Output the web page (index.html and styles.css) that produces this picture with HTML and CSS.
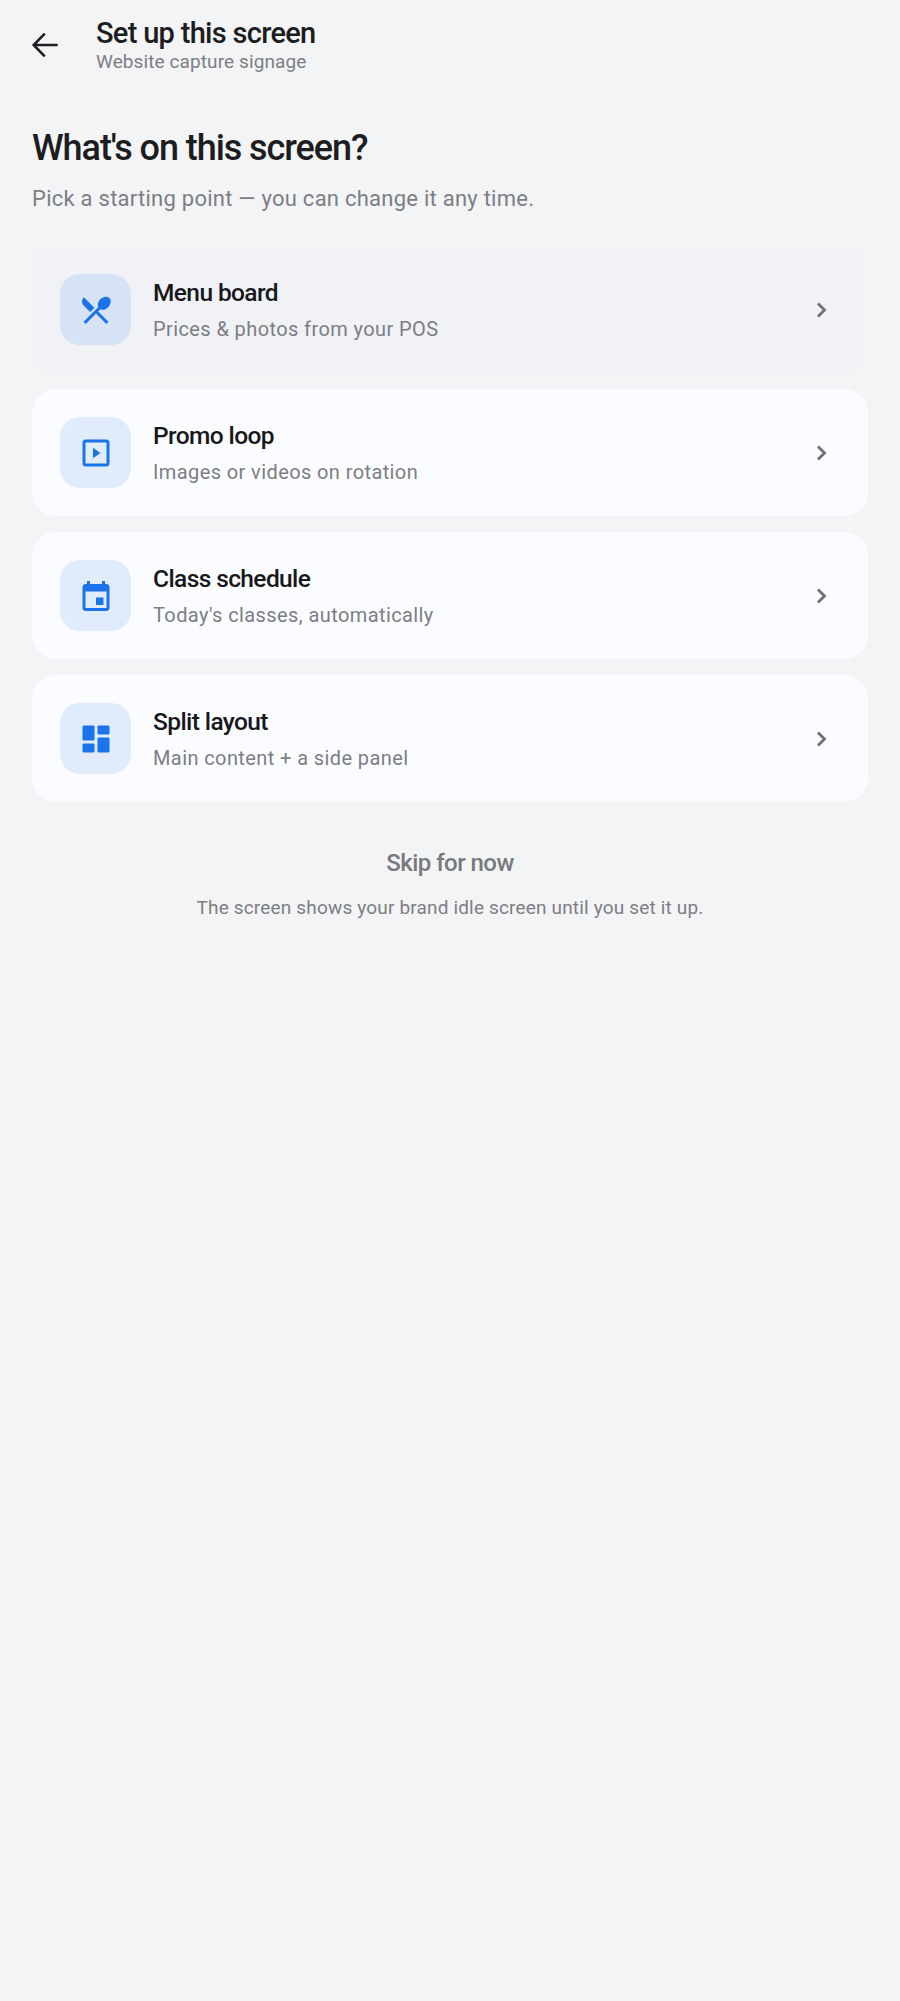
FILE: index.html
```html
<!DOCTYPE html>
<html lang="en">
<head>
  <meta charset="utf-8">
  <title>Set up this screen</title>
  <link rel="stylesheet" href="styles.css">
</head>
<body>
  <header class="topbar">
    <button class="back" aria-label="Back">
      <svg viewBox="0 0 24 24" width="32" height="32"><path d="M21.500 12H4M11.800 3.500 3.500 12l8.300 8.500" fill="none" stroke="#1c1d20" stroke-width="1.900"/></svg>
    </button>
    <div class="topbar-text">
      <div class="topbar-title">Set up this screen</div>
      <div class="topbar-sub">Website capture signage</div>
    </div>
  </header>

  <main class="content">
    <h1>What's on this screen?</h1>
    <p class="lead">Pick a starting point — you can change it any time.</p>

    <div class="cards">
      <div class="card card-active">
        <div class="icon">
          <svg viewBox="0 0 24 24" width="36" height="36"><path d="M8.100 13.340l2.830-2.830L3.910 3.500c-1.560 1.560-1.560 4.090 0 5.660l4.190 4.180zm6.780-1.810c1.530.71 3.680.21 5.270-1.380 1.910-1.910 2.280-4.650.81-6.120-1.460-1.460-4.200-1.100-6.120.81-1.590 1.590-2.090 3.740-1.380 5.270L3.700 19.870l1.410 1.410L12 14.410l6.880 6.880 1.410-1.410L13.410 13l1.470-1.470z" fill="#1a73e8"/></svg>
        </div>
        <div class="card-text">
          <div class="card-title">Menu board</div>
          <div class="card-sub">Prices &amp; photos from your POS</div>
        </div>
        <svg class="chev" viewBox="0 0 24 24" width="24" height="24"><path d="M9 5.500l6.500 6.500L9 18.500" fill="none" stroke="#6f7177" stroke-width="2.800"/></svg>
      </div>

      <div class="card">
        <div class="icon">
          <svg viewBox="0 0 24 24" width="36" height="36"><path d="M10 8.500v7l5-3.500-5-3.500zm9-5.500H5c-1.100 0-2 .9-2 2v14c0 1.100.9 2 2 2h14c1.100 0 2-.9 2-2V5c0-1.100-.9-2-2-2zm0 16H5V5h14v14z" fill="#1a73e8"/></svg>
        </div>
        <div class="card-text">
          <div class="card-title">Promo loop</div>
          <div class="card-sub">Images or videos on rotation</div>
        </div>
        <svg class="chev" viewBox="0 0 24 24" width="24" height="24"><path d="M9 5.500l6.500 6.500L9 18.500" fill="none" stroke="#6f7177" stroke-width="2.800"/></svg>
      </div>

      <div class="card">
        <div class="icon">
          <svg viewBox="0 0 24 24" width="36" height="36"><path transform="translate(0 1)" d="M17 12h-5v5h5v-5zM16 1v2H8V1H6v2H5c-1.110 0-1.990.9-1.990 2L3 19c0 1.100.89 2 2 2h14c1.100 0 2-.9 2-2V5c0-1.100-.9-2-2-2h-1V1h-2zm3 18H5V8h14v11z" fill="#1a73e8"/></svg>
        </div>
        <div class="card-text">
          <div class="card-title">Class schedule</div>
          <div class="card-sub">Today's classes, automatically</div>
        </div>
        <svg class="chev" viewBox="0 0 24 24" width="24" height="24"><path d="M9 5.500l6.500 6.500L9 18.500" fill="none" stroke="#6f7177" stroke-width="2.800"/></svg>
      </div>

      <div class="card">
        <div class="icon">
          <svg viewBox="0 0 24 24" width="36" height="36"><rect x="3" y="3" width="8" height="10" rx=".8" fill="#1a73e8"/><rect x="3" y="15" width="8" height="6" rx=".8" fill="#1a73e8"/><rect x="13" y="3" width="8" height="6" rx=".8" fill="#1a73e8"/><rect x="13" y="11" width="8" height="10" rx=".8" fill="#1a73e8"/></svg>
        </div>
        <div class="card-text">
          <div class="card-title">Split layout</div>
          <div class="card-sub">Main content + a side panel</div>
        </div>
        <svg class="chev" viewBox="0 0 24 24" width="24" height="24"><path d="M9 5.500l6.500 6.500L9 18.500" fill="none" stroke="#6f7177" stroke-width="2.800"/></svg>
      </div>
    </div>

    <div class="skip">Skip for now</div>
    <p class="note">The screen shows your brand idle screen until you set it up.</p>
  </main>
</body>
</html>
```

FILE: styles.css
```css
* {
  box-sizing: border-box;
}

html, body {
  margin: 0;
}

body {
  min-height: 2001px;
  background-color: #f3f4f6;
  font-family: Roboto, "Liberation Sans", sans-serif;
  color: #1c1d20;
}

.topbar {
  display: flex;
  align-items: flex-start;
  height: 73px;
  padding: 16px 0 0 29px;
}

.back {
  width: 32px;
  height: 32px;
  margin-top: 13px;
  padding: 0;
  border: 0;
  background: none;
}

.topbar-text {
  margin-left: 35px;
}

.topbar-title {
  font-size: 29px;
  line-height: 34px;
  font-weight: 500;
  letter-spacing: -0.7px;
}

.topbar-sub {
  margin-top: 1px;
  font-size: 19px;
  line-height: 22px;
  color: #7c7e84;
  letter-spacing: 0.1px;
}

.content {
  padding: 0 32px;
}

h1 {
  margin: 54px 0 0;
  font-size: 36px;
  line-height: 42px;
  font-weight: 500;
  letter-spacing: -1.07px;
}

.lead {
  margin: 16px 0 0;
  font-size: 22px;
  line-height: 28px;
  color: #7c7e84;
  letter-spacing: 0.25px;
}

.cards {
  display: flex;
  flex-direction: column;
  gap: 16px;
  margin-top: 33px;
}

.card {
  display: flex;
  align-items: center;
  height: 127px;
  padding: 0 28px;
  border-radius: 24px;
  background-color: #fbfcff;
}

.card-active {
  background: linear-gradient(#f1f2f6, #f1f2f6) no-repeat 0 3px / calc(100% - 4px) calc(100% - 3px);
}

.icon {
  display: flex;
  align-items: center;
  justify-content: center;
  flex: none;
  width: 71px;
  height: 71px;
  border-radius: 20px;
  background-color: #e0ebfc;
}

.card-active .icon {
  background-color: #d6e3f5;
}

.card-text {
  flex: 1;
  margin-left: 22px;
}

.card-title {
  font-size: 24.500px;
  line-height: 32px;
  font-weight: 500;
  letter-spacing: -0.6px;
  color: #17181b;
}

.card-sub {
  margin-top: 7px;
  font-size: 20px;
  line-height: 26px;
  color: #7c7e84;
  letter-spacing: 0.4px;
}

.chev {
  flex: none;
  margin-right: 7px;
}

.skip {
  margin-top: 46px;
  text-align: center;
  font-size: 24px;
  line-height: 30px;
  font-weight: 500;
  letter-spacing: -0.55px;
  color: #78797e;
}

.note {
  margin: 17px 0 0;
  text-align: center;
  font-size: 19px;
  line-height: 26px;
  color: #7c7e84;
  letter-spacing: 0.17px;
}
```
